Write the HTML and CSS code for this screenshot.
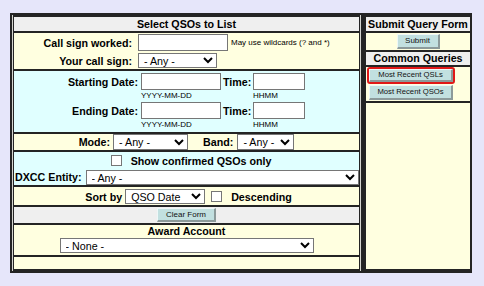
FILE: index.html
```html
<!DOCTYPE html>
<html>
<head>
<meta charset="utf-8">
<title>Select QSOs to List</title>
<link rel="stylesheet" href="styles.css">
</head>
<body>
<div class="frame">
  <div class="lcol">
    <div class="hdr">Select QSOs to List</div>

    <div class="cream callrow">
      <span class="b r">Call sign worked:</span>
      <input class="txt w90" type="text">
      <span class="tiny wild">May use wildcards (? and *)</span>
      <span class="b r">Your call sign:</span>
      <select class="sel w79"><option>- Any -</option></select>
      <span></span>
    </div>

    <div class="cyan dates">
      <span class="b r pr3">Starting Date:</span>
      <input class="txt w80" type="text">
      <span class="b">Time:</span>
      <input class="txt w52" type="text">
      <span></span>
      <span class="tiny hint">YYYY-MM-DD</span>
      <span></span>
      <span class="tiny hint">HHMM</span>
      <span class="b r pr3">Ending Date:</span>
      <input class="txt w80" type="text">
      <span class="b">Time:</span>
      <input class="txt w52" type="text">
      <span></span>
      <span class="tiny hint">YYYY-MM-DD</span>
      <span></span>
      <span class="tiny hint">HHMM</span>
    </div>

    <div class="cream mode">
      <span class="b">Mode:</span>
      <select class="sel w75 ml3 h16"><option>- Any -</option></select>
      <span class="b ml15">Band:</span>
      <select class="sel w57 ml4 h16"><option>- Any -</option></select>
    </div>

    <div class="cyan conf">
      <div class="confline">
        <input class="chk" type="checkbox">
        <span class="b ml6">Show confirmed QSOs only</span>
      </div>
      <div class="dxline">
        <span class="b">DXCC Entity:</span>
        <select class="sel grow ml4"><option>- Any -</option></select>
      </div>
    </div>

    <div class="cream sort">
      <span class="b">Sort by</span>
      <select class="sel w80 ml3"><option>QSO Date</option></select>
      <input class="chk ml6" type="checkbox">
      <span class="b ml6">Descending</span>
    </div>

    <div class="gray clear">
      <button class="btn w59" type="button">Clear Form</button>
    </div>

    <div class="cream award">
      <div class="b awtitle">Award Account</div>
      <select class="sel w254"><option>- None -</option></select>
    </div>

    <div class="cream empty"></div>
  </div>

  <div class="rcol">
    <div class="hdr">Submit Query Form</div>
    <div class="cream subm">
      <button class="btn w43" type="submit">Submit</button>
    </div>
    <div class="cq">Common Queries</div>
    <div class="cream quick">
      <div class="hl"><button class="btn qbtn q1" type="button">Most Recent QSLs</button></div>
      <button class="btn qbtn q2" type="button">Most Recent QSOs</button>
    </div>
    <div class="cream rest"></div>
  </div>
</div>
</body>
</html>
```

FILE: styles.css
```css
* { box-sizing: border-box; }

body {
  margin: 0;
  padding: 13px 0 0 10px;
  background: #e6e6fa;
  font-family: "Liberation Sans", Arial, sans-serif;
  color: #000;
}

.frame {
  width: 462px;
  height: 260px;
  border: 2px solid #242424;
  background: #242424;
  display: flex;
}

.lcol {
  width: 348px;
  border-left: 1px solid #d6d6d0;
  padding: 2px 1px;
  display: flex;
  flex-direction: column;
  gap: 2px;
}

.rcol {
  flex: 1;
  border-left: 1px solid #d6d6d0;
  padding: 2px 0 2px 5px;
  display: flex;
  flex-direction: column;
  gap: 2px;
}

.lcol > div, .rcol > div { flex: none; }

.hdr {
  height: 14px;
  background: #efefef;
  font-weight: bold;
  font-size: 10.7px;
  line-height: 14px;
  text-align: center;
  white-space: nowrap;
}

.cream { background: #ffffe0; }
.cyan { background: #e0ffff; }
.gray { background: #efefef; }

.b { font-weight: bold; font-size: 10.7px; white-space: nowrap; }
.r { text-align: right; }
.pr3 { padding-right: 3px; }
.tiny { font-size: 8px; white-space: nowrap; }

.ml3 { margin-left: 3px; }
.ml4 { margin-left: 4px; }
.ml6 { margin-left: 6px; }
.ml15 { margin-left: 15px; }

.txt {
  display: block;
  height: 17px;
  margin: 0;
  padding: 0 2px;
  border: 1px solid #767676;
  background: #fff;
  font: 10.7px "Liberation Sans", Arial, sans-serif;
}

.sel {
  display: block;
  height: 15px;
  margin-top: 0;
  margin-bottom: 0;
  padding: 0 0 0 1px;
  border: 1px solid #767676;
  border-radius: 0;
  background: #fff;
  color: #000;
  font: 10.7px "Liberation Sans", Arial, sans-serif;
}
.h16 { height: 16px; }

.w43 { width: 43px; }
.w52 { width: 52px; }
.w57 { width: 57px; }
.w59 { width: 59px; }
.w75 { width: 75px; }
.w79 { width: 79px; }
.w80 { width: 80px; }
.w90 { width: 90px; }
.w254 { width: 254px; }
.grow { flex: 1; min-width: 0; }

.chk {
  appearance: none;
  -webkit-appearance: none;
  display: block;
  width: 11px;
  height: 11px;
  margin-top: 0;
  margin-bottom: 0;
  border: 1px solid #767676;
  background: #fff;
}

/* call sign row */
.callrow {
  height: 36px;
  padding-top: 1px;
  display: grid;
  grid-template-columns: 118px 90px auto;
  grid-template-rows: 17px 15px;
  column-gap: 6px;
  row-gap: 2px;
  align-items: center;
}
.wild { margin-left: -3px; }

/* dates */
.dates {
  height: 61px;
  padding-top: 2px;
  display: grid;
  grid-template-columns: 127px 82px 30px 52px;
  grid-template-rows: 17px 12px 17px 12px;
  align-items: center;
}
.hint { line-height: 12px; }

/* mode / band */
.mode {
  height: 16px;
  display: flex;
  justify-content: center;
  align-items: center;
}

/* confirmed + dxcc */
.conf { height: 33px; }
.confline {
  height: 16px;
  padding: 1px 0 0 5px;
  display: flex;
  justify-content: center;
  align-items: center;
}
.dxline {
  height: 17px;
  padding: 1px 0 0 1px;
  display: flex;
  align-items: center;
}

/* sort */
.sort {
  height: 18px;
  padding: 2px 0 1px 4px;
  display: flex;
  justify-content: center;
  align-items: center;
}

/* clear */
.clear {
  height: 16px;
  display: flex;
  justify-content: center;
  align-items: center;
}

/* award */
.award {
  height: 30px;
  display: flex;
  flex-direction: column;
  align-items: center;
}
.awtitle { line-height: 13px; height: 13px; }

.empty { height: 12px; }

/* buttons */
.btn {
  display: block;
  height: 14px;
  margin: 0;
  padding: 0;
  background: #c2e0e0;
  border-style: solid;
  border-width: 1px 2px 2px 1px;
  border-color: #eef7f7 #8c9a9a #8c9a9a #eef7f7;
  color: #111;
  font: 8px "Liberation Sans", Arial, sans-serif;
  line-height: 1;
  white-space: nowrap;
}

.subm {
  height: 17px;
  display: flex;
  justify-content: center;
  align-items: center;
}
.subm .btn { height: 15px; }

.cq {
  height: 13px;
  background: #efefef;
  font-weight: bold;
  font-size: 10.7px;
  line-height: 13px;
  text-align: center;
  white-space: nowrap;
}

.quick {
  height: 34px;
  padding-left: 1px;
  display: flex;
  flex-direction: column;
  align-items: flex-start;
}
.hl {
  border: 2px solid #e01818;
  border-radius: 3px;
}
.qbtn { width: 84px; font-size: 7.7px; }
.q1 { height: 13px; }
.q2 { height: 15px; margin: 1px 0 0 2px; }

.rest { flex: 1 !important; }
```
